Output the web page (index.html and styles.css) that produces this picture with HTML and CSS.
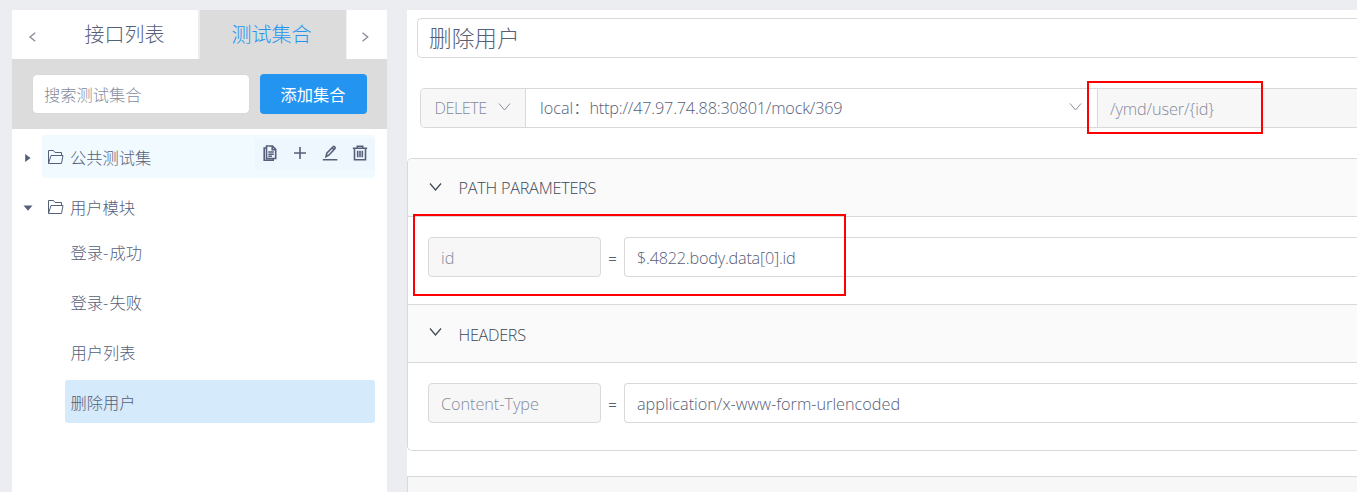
FILE: index.html
```html
<!DOCTYPE html>
<html lang="zh-CN">
<head>
<meta charset="utf-8">
<title>测试集合</title>
<link rel="stylesheet" href="styles.css">
</head>
<body>
<div class="layout">
  <aside class="sidebar">
    <nav class="tabs">
      <span class="tab-arrow"><svg width="9" height="12" viewBox="0 0 9 12"><path d="M7.2 1.8 2 6l5.200 4.200"/></svg></span>
      <span class="tab">接口列表</span>
      <span class="tab tab-active">测试集合</span>
      <span class="tab-arrow tab-next"><svg width="9" height="12" viewBox="0 0 9 12"><path d="M1.500 1.800 6.700 6 1.500 10.200"/></svg></span>
    </nav>
    <div class="toolbar">
      <div class="search">搜索测试集合</div>
      <div class="add">添加集合</div>
    </div>
    <div class="tree">
      <div class="node">
        <svg class="caret" width="12" height="12" viewBox="0 0 12 12"><path d="M3.200 2 8.600 6l-5.400 4z"/></svg>
        <div class="row row-hover">
          <svg class="folder" width="17" height="16" viewBox="0 0 17 16"><path d="M1.500 14.500v-13h5l1.500 2h6.500v3M1.500 14.500l2.500-8h12l-1.500 8z"/></svg>
          <span class="label">公共测试集</span>
          <div class="actions">
            <svg width="16" height="18" viewBox="0 0 16 18"><path d="M4.500 2h6l3.200 3.400v9.100H4.500zM10.200 2.200v3.500h3.400M3.800 4H2.200v12.200h9v-1.400M6.300 8h5.500M6.300 10.200h5.500M6.300 12.300h3.600"/></svg>
            <svg width="16" height="18" viewBox="0 0 16 18"><path d="M8 3v12M2 9h12"/></svg>
            <svg width="16" height="18" viewBox="0 0 16 18"><path d="M.8 15.700h14.500M4 12.700l.8-3.500 6.300-6.500c.8-.8 2.600.8 1.900 1.900l-6.200 6.600zM10 3.800l2 2"/></svg>
            <svg width="16" height="18" viewBox="0 0 16 18"><path d="M.8 4.300h14.400M5.300 4V2.300h5.400V4M2.500 4.500v11.200h11V4.500M5.700 6.800v6.500M8 6.800v6.500M10.300 6.800v6.500"/></svg>
          </div>
        </div>
      </div>
      <div class="node">
        <svg class="caret" width="12" height="12" viewBox="0 0 12 12"><path d="M1.500 3.500h9L6 8.700z"/></svg>
        <div class="row">
          <svg class="folder" width="17" height="16" viewBox="0 0 17 16"><path d="M1.500 14.500v-13h5l1.500 2h6.500v3M1.500 14.500l2.500-8h12l-1.500 8z"/></svg>
          <span class="label">用户模块</span>
        </div>
      </div>
      <div class="leaf">登录<span class="dash">-</span>成功</div>
      <div class="leaf">登录<span class="dash">-</span>失败</div>
      <div class="leaf">用户列表</div>
      <div class="leaf leaf-active">删除用户</div>
    </div>
  </aside>
  <main class="main">
    <div class="title">删除用户</div>
    <div class="request">
      <div class="method"><span class="verb">DELETE</span><svg class="chev" width="13" height="10" viewBox="0 0 13 10"><path d="m1 1.500 5.500 6.500L12 1.500"/></svg></div>
      <div class="domain"><span class="env">local：</span><span class="host">http://47.97.74.88:30801/mock/369</span><svg class="chev" width="13" height="10" viewBox="0 0 13 10"><path d="m1 1.500 5.500 6.500L12 1.500"/></svg></div>
      <div class="path"><span class="path-text">/ymd/user/{id}</span><i class="mark mark-path"></i></div>
    </div>
    <section class="collapse">
      <div class="head"><svg class="chev" width="13" height="10" viewBox="0 0 13 10"><path d="m1 1.500 5.500 6.500L12 1.500"/></svg><span class="head-path">PATH PARAMETERS</span></div>
      <div class="body">
        <div class="key"><span>id</span></div><span class="eq">=</span><div class="value"><span class="v-id">$.4822.body.data[0].id</span></div>
        <i class="mark mark-id"></i>
      </div>
      <div class="head"><svg class="chev" width="13" height="10" viewBox="0 0 13 10"><path d="m1 1.500 5.500 6.500L12 1.500"/></svg><span class="head-headers">HEADERS</span></div>
      <div class="body">
        <div class="key"><span class="k-type">Content-Type</span></div><span class="eq">=</span><div class="value"><span class="v-type">application/x-www-form-urlencoded</span></div>
      </div>
    </section>
    <div class="next-panel"></div>
  </main>
</div>
</body>
</html>
```
FILE: styles.css
```css
* { box-sizing: border-box; }
body {
  margin: 0;
  background: #ecedf1;
  color: #566079;
  font: 300 16.25px/24px "Open Sans", "Noto Sans CJK SC", sans-serif;
  overflow: hidden;
}
svg { fill: none; stroke: currentColor; flex: none; display: block; }
.layout { display: flex; gap: 20px; height: 492px; padding: 10px 0 0 12px; }
.sidebar { width: 375px; flex: none; background: #fff; }

.tabs { display: flex; height: 49px; font-size: 20px; }
.tab-arrow { width: 40px; display: flex; align-items: center; justify-content: center; padding-top: 5px; color: #8b909c; }
.tab-arrow svg { stroke-width: 1.4; }
.tab { width: 146px; display: flex; align-items: center; justify-content: center; padding: 1px 1px 0 0; }
.tab-active { width: 148px; padding-right: 3px; color: #2395f1; background: #dcdcdc; border-left: 2px solid #ececec; }
.tab-next { width: 41px; padding-right: 4px; border-left: 1px solid #f0f0f0; }
.toolbar { display: flex; gap: 10px; height: 70px; padding: 15px 20px 15px 20px; background: #dcdcdc; }
.search { width: 218px; height: 40px; padding: 0 11px; line-height: 41px; background: #fff; border: 1px solid #d9d9d9; border-radius: 5px; color: #858b9d; }
.add { width: 107px; height: 40px; line-height: 42px; padding-right: 1px; text-align: center; background: #2395f1; color: #fff; font-weight: 400; border-radius: 4px; }

.tree { padding: 6px 12px 0 10px; }
.node { display: flex; height: 50px; align-items: flex-start; }
.node + .node { height: 45px; }
.caret { fill: currentColor; stroke: none; margin: 17px 8px 0 0; }
.row { flex: 1; display: flex; height: 43px; padding-left: 5px; border-radius: 3px; }
.row-hover { background: #f0faff; }
.folder { margin: 14px 6px 0 0; }
.label { line-height: 46px; }
.actions { display: flex; gap: 14px; width: 120px; height: 31px; margin: 4px 0 0 auto; padding: 5px 7px; background: #eef6fe; }
.actions svg { stroke-width: 1.6; }
.leaf { height: 43px; line-height: 46px; margin: 0 0 7px 43px; padding-left: 5.500px; border-radius: 3px; }
.leaf-active { background: #d5eafb; }
.dash { letter-spacing: 1.200px; }

.main { flex: 1; min-width: 0; background: #fff; }
.title { height: 40px; margin: 8px 0 0 10px; padding-left: 11px; font-size: 22.7px; line-height: 40px; border: 1px solid #d9d9d9; border-right: 0; border-radius: 5px 0 0 5px; }
.request { display: flex; height: 40px; margin: 30px 0 0 13px; border: 1px solid #d9d9d9; border-right: 0; border-radius: 5px 0 0 5px; line-height: 39px; }
.method { display: flex; justify-content: space-between; width: 105px; padding: 0 14px 0 13.500px; background: #f7f7f7; border-right: 1px solid #d9d9d9; border-radius: 4px 0 0 4px; color: #858b9d; }
.verb { letter-spacing: -.5px; }
.request .chev { margin-top: 13px; color: #898e9a; }
.domain { display: flex; width: 571px; padding: 0 15px 0 14px; }
.domain .chev { margin-left: auto; }
.host { letter-spacing: -.2px; }
.path { position: relative; flex: 1; padding-left: 12px; line-height: 40px; background: #f7f7f7; border-left: 1px solid #d9d9d9; color: #858b9d; }
.path-text { letter-spacing: -.1px; }
.mark { position: absolute; border: 2px solid #f00; outline: 1px solid rgba(255, 0, 0, .3); outline-offset: -1px; }
.mark-path { left: -11px; top: -8px; width: 176px; height: 53px; }
.mark-id { left: 5px; top: -3px; width: 433px; height: 82px; }

.collapse { margin-top: 30px; height: 293px; border: 1px solid #d9d9d9; border-right: 0; border-radius: 5px 0 0 5px; }
.head { display: flex; height: 58px; padding: 1px 0 0 21px; gap: 16.500px; line-height: 57px; background: #fafafa; border-bottom: 1px solid #d9d9d9; color: #3b4754; border-radius: 4px 0 0 0; }
.head .chev { margin-top: 22px; stroke-width: 1.200; }
.head-path { letter-spacing: -.25px; }
.head-headers { letter-spacing: -.3px; }
.body { position: relative; display: flex; height: 87px; padding: 20px 0 0 20px; line-height: 40px; }
.body + .head { height: 59px; padding-top: 0; line-height: 60px; border-top: 1px solid #d9d9d9; border-radius: 0; }
.key { width: 173px; height: 40px; padding-left: 12px; background: #f7f7f7; border: 1px solid #d9d9d9; border-radius: 4px; color: #858b9d; }
.k-type { letter-spacing: -.05px; }
.eq { width: 23px; text-align: center; line-height: 43px; font-weight: 400; font-size: 15px; }
.value { flex: 1; height: 40px; padding-left: 12px; border: 1px solid #d9d9d9; border-right: 0; border-radius: 4px 0 0 4px; }
.v-id { letter-spacing: -.23px; }
.next-panel { height: 20px; margin-top: 25px; background: #f7f7f7; border-top: 1px solid #d9d9d9; border-left: 1px solid #d9d9d9; }
```
